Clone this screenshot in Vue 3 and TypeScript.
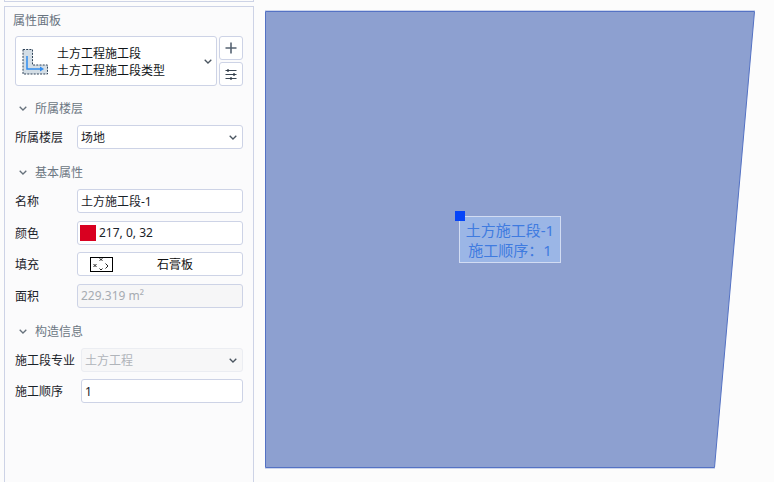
<script setup lang="ts">
const label = '土方施工段-1'
</script>

<template>
  <div class="page">
    <aside class="side">
      <div class="prev"></div>
      <div class="panel">
        <div class="title">属性面板</div>
        <div class="head">
          <div class="type">
            <svg class="type-ic" width="27" height="27" viewBox="0 0 27 27">
              <path d="M1 1.500H10.500V17H25.500V26H1Z" fill="#d3dde5" stroke="#2f4358" stroke-width="1" stroke-dasharray="2 1.200"/>
              <path d="M5 8V21H19" fill="none" stroke="#2f8cf0" stroke-width="1.500"/>
              <path d="M18 18.500L22 21L18 23.500Z" fill="#2f8cf0"/>
            </svg>
            <div class="type-txt">
              <div>土方工程施工段</div>
              <div>土方工程施工段类型</div>
            </div>
            <svg class="chev" width="8" height="5" viewBox="0 0 8 5"><path d="M.7.7L4 4L7.300.7" fill="none" stroke="#4a5560" stroke-width="1.300"/></svg>
          </div>
          <div class="btns">
            <button class="sq">
              <svg width="12" height="12" viewBox="0 0 12 12"><path d="M6 .5V11.500M.5 6H11.500" stroke="#566372" stroke-width="1.600" fill="none"/></svg>
            </button>
            <button class="sq">
              <svg width="12" height="11" viewBox="0 0 12 11"><path d="M.5 1.500H11.500M.5 5.500H11.500M.5 9.500H11.500" stroke="#3a4653" stroke-width="1.200" fill="none"/><path d="M3 0V3M9 4V7M6 8V11" stroke="#2a3541" stroke-width="1.200" fill="none"/></svg>
            </button>
          </div>
        </div>

        <div class="sect first"><svg class="sec-chev" width="8" height="5" viewBox="0 0 8 5"><path d="M.7.7L4 4L7.300.7" fill="none" stroke="#66717c" stroke-width="1.300"/></svg>所属楼层</div>
        <div class="row">
          <span class="lab">所属楼层</span>
          <div class="field sel"><span>场地</span><svg class="chev" width="8" height="5" viewBox="0 0 8 5"><path d="M.7.7L4 4L7.300.7" fill="none" stroke="#4a5560" stroke-width="1.300"/></svg></div>
        </div>

        <div class="sect"><svg class="sec-chev" width="8" height="5" viewBox="0 0 8 5"><path d="M.7.7L4 4L7.300.7" fill="none" stroke="#66717c" stroke-width="1.300"/></svg>基本属性</div>
        <div class="row"><span class="lab">名称</span><div class="field"><span>{{ label }}</span></div></div>
        <div class="row gap"><span class="lab">颜色</span><div class="field color"><i class="swatch"></i><span>217, 0, 32</span></div></div>
        <div class="row gap"><span class="lab">填充</span>
          <div class="field fill">
            <svg class="hatch" width="23" height="15" viewBox="0 0 23 15">
              <rect x=".5" y=".5" width="22" height="14" fill="#fff" stroke="#000"/>
              <path d="M3.500 7L6.500 10M6.500 7L3.500 10M15.500 6.500L18 9L15.500 11.500M18 9" stroke="#222" stroke-width="1" fill="none"/>
              <path d="M9.500 1.500L12.500 3.500M12.500 1.500L9.500 3.500M9.500 11.500L11 13L12.500 11.500" stroke="#222" stroke-width="1" fill="none"/>
            </svg>
            <span class="fill-name">石膏板</span>
          </div>
        </div>
        <div class="row gap"><span class="lab">面积</span><div class="field off"><span>229.319 m²</span></div></div>

        <div class="sect third"><svg class="sec-chev" width="8" height="5" viewBox="0 0 8 5"><path d="M.7.7L4 4L7.300.7" fill="none" stroke="#66717c" stroke-width="1.300"/></svg>构造信息</div>
        <div class="row wide"><span class="lab">施工段专业</span><div class="field sel dis"><span>土方工程</span><svg class="chev" width="8" height="5" viewBox="0 0 8 5"><path d="M.7.7L4 4L7.300.7" fill="none" stroke="#4a5560" stroke-width="1.300"/></svg></div></div>
        <div class="row wide last"><span class="lab">施工顺序</span><div class="field"><span>1</span></div></div>
      </div>
    </aside>

    <main class="canvas">
      <svg class="shape" width="774" height="482" viewBox="0 0 774 482">
        <path d="M265 10.500H755M265 468.500H715" stroke="#ccd5ec" stroke-width="1" fill="none"/>
        <path d="M265.500 11.500H754.500L714.500 467.500H265.500Z" fill="#8da0d0" stroke="#5472c4" stroke-width="1"/>
      </svg>
      <div class="tag">
        <div>土方施工段-1</div>
        <div>施工顺序：1</div>
      </div>
      <i class="grip"></i>
    </main>
  </div>
</template>

<style>
html, body { margin: 0; background: #fcfcfc; }
</style>

<style scoped>
.page {
  width: 774px;
  height: 482px;
  display: flex;
  overflow: hidden;
  position: relative;
  background: #fcfcfc;
  font-family: "Noto Sans", "Noto Sans CJK SC", sans-serif;
  font-size: 12px;
  color: #1d2730;
}
.side { width: 254px; flex: none; padding-left: 4px; box-sizing: border-box; }
.prev { height: 2px; border: 1px solid #cdd3e6; border-top: 0; box-sizing: border-box; margin-bottom: 4px; }
.panel {
  height: 476px;
  box-sizing: border-box;
  border: 1px solid #cdd3e6;
  border-bottom: 0;
  padding: 5px 10px 0 10px;
  background: #fbfbfc;
}
.title { height: 24px; line-height: 17px; color: #68737f; font-size: 12px; margin-left: -2px; }
.head { display: flex; gap: 2px; height: 50px; }
.type {
  flex: 1;
  display: flex;
  align-items: center;
  background: #fff;
  border: 1px solid #cdd3e6;
  border-radius: 3px;
  padding: 0 2px 0 6px;
  position: relative;
}
.type-ic { flex: none; margin-top: 0; }
.type-txt { flex: 1; margin-left: 8px; padding-top: 2px; line-height: 17px; color: #101418; }
.chev { flex: none; margin-right: 2px; }
.btns { width: 24px; display: flex; flex-direction: column; gap: 2px; }
.sq {
  flex: 1;
  padding: 0;
  background: #fff;
  border: 1px solid #cdd3e6;
  border-radius: 3px;
  display: flex;
  align-items: center;
  justify-content: center;
}
.sect {
  display: flex;
  align-items: center;
  height: 17px;
  margin: 15px 0 8px 4px;
  color: #6c7783;
  line-height: 17px;
}
.sect.first { margin-top: 14px; }
.sect.third { margin-top: 15.500px; }
.sec-chev { margin-right: 8px; }
.row { display: flex; align-items: center; height: 24px; }
.row.gap { margin-top: 7.500px; }
.row.last { margin-top: 7px; }
.lab { width: 62px; flex: none; color: #1a2229; }
.wide .lab { width: 66px; white-space: nowrap; }
.field {
  flex: 1;
  height: 24px;
  box-sizing: border-box;
  display: flex;
  align-items: center;
  background: #fff;
  border: 1px solid #cdd3e6;
  border-radius: 3px;
  padding: 0 3px;
  color: #1a2229;
  min-width: 0;
}
.sel { justify-content: space-between; }
.dis { background: #f7f7f8; border-color: #ebedf2; color: #b0b4ba; }
.off { background: #f6f6f7; color: #a6abb2; }
.color { padding-left: 2px; }
.swatch { width: 16px; height: 16px; background: #d90020; margin-right: 3px; flex: none; }
.fill { position: relative; }
.hatch { margin-left: 9px; flex: none; }
.fill-name { position: absolute; left: 0; right: 0; text-align: center; padding-left: 30px; color: #111; }
.canvas { flex: 1; }
.shape { position: absolute; left: 0; top: 0; }
.tag {
  position: absolute;
  left: 459px;
  top: 216px;
  width: 102px;
  height: 47px;
  box-sizing: border-box;
  background: #9bb6e6;
  border: 1px solid #d2dcf2;
  color: #3f7be0;
  font-size: 15px;
  line-height: 20px;
  padding-top: 3px;
  text-align: center;
  white-space: nowrap;
}
.grip {
  position: absolute;
  left: 455px;
  top: 211px;
  width: 10px;
  height: 10px;
  background: #0544f8;
}
</style>
